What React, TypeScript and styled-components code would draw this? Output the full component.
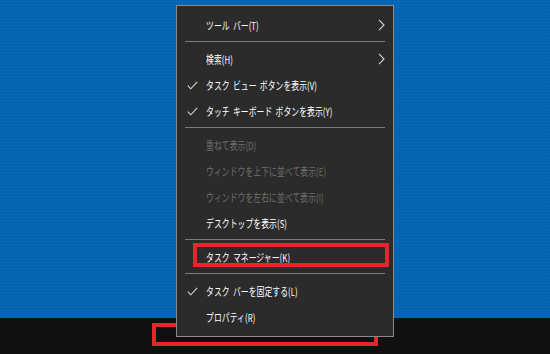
import React from "react";
import styled, { createGlobalStyle, css } from "styled-components";

const Global = createGlobalStyle`
  html, body { margin: 0; padding: 0; background: #101010; }
  body { font-family: "Noto Sans CJK JP", "Noto Sans", sans-serif; }
`;

const Screen = styled.div`
  position: relative;
  width: 550px;
  height: 354px;
  overflow: hidden;
  display: flex;
  flex-direction: column;
`;

const Desktop = styled.div`
  flex: 1;
  background-color: #0563b4;
  background-image: radial-gradient(rgba(40, 140, 160, 0.22) 0.6px, transparent 0.8px);
  background-size: 4px 3px;
`;

const Taskbar = styled.div`
  height: 36px;
  box-sizing: border-box;
  padding: 5px 0 0 152px;
  background: #101010;
  display: flex;
  align-items: flex-start;
`;

const TaskbarMark = styled.div`
  width: 226px;
  height: 23px;
  box-sizing: border-box;
  border: 4px solid #e8242c;
`;

const Menu = styled.div`
  position: absolute;
  left: 176px;
  top: 5px;
  width: 216px;
  padding: 6px 0;
  background: #2b2b2b;
  border: 1px solid #8a8a8a;
  display: flex;
  flex-direction: column;
`;

const Item = styled.div<{ $disabled?: boolean; $marked?: boolean }>`
  position: relative;
  height: 26px;
  display: grid;
  grid-template-columns: 29px 1fr 16px;
  align-items: center;
  color: ${(p) => (p.$disabled ? "#6e6e6e" : "#ffffff")};
  font-size: 11px;
  white-space: nowrap;
  ${(p) =>
    p.$marked &&
    css`
      &::after {
        content: "";
        position: absolute;
        left: 16px;
        right: 4px;
        top: -1px;
        bottom: 3px;
        border: 4px solid #e8242c;
      }
    `}
`;

const Label = styled.span`
  display: inline-block;
  transform: scaleX(0.71);
  transform-origin: left center;
  letter-spacing: 0.1px;
  word-spacing: 2px;
`;

const Check = styled.svg`
  margin-left: 10px;
`;

const Chevron = styled.svg`
  justify-self: start;
  margin-left: 1px;
`;

const Separator = styled.div`
  height: 1px;
  margin: 3px 8px 4px 8px;
  background: #7c7c7c;
`;

const CheckIcon = () => (
  <Check width="11" height="9" viewBox="0 0 11 9">
    <path d="M0.8 4.6 L3.8 7.8 L10.2 0.8" fill="none" stroke="#d6d6d6" strokeWidth="1.1" />
  </Check>
);

const ChevronIcon = () => (
  <Chevron width="7" height="12" viewBox="0 0 7 12">
    <path d="M1 0.8 L6 6 L1 11.2" fill="none" stroke="#d6d6d6" strokeWidth="1.1" />
  </Chevron>
);

type Row =
  | { sep: true }
  | { label: string; check?: boolean; sub?: boolean; disabled?: boolean; marked?: boolean };

const rows: Row[] = [
  { label: "ツール バー(T)", sub: true },
  { sep: true },
  { label: "検索(H)", sub: true },
  { label: "タスク ビュー ボタンを表示(V)", check: true },
  { label: "タッチ キーボード ボタンを表示(Y)", check: true },
  { sep: true },
  { label: "重ねて表示(D)", disabled: true },
  { label: "ウィンドウを上下に並べて表示(E)", disabled: true },
  { label: "ウィンドウを左右に並べて表示(I)", disabled: true },
  { label: "デスクトップを表示(S)" },
  { sep: true },
  { label: "タスク マネージャー(K)", marked: true },
  { sep: true },
  { label: "タスク バーを固定する(L)", check: true },
  { label: "プロパティ(R)" },
];

export default function App() {
  return (
    <Screen>
      <Global />
      <Desktop />
      <Taskbar>
        <TaskbarMark />
      </Taskbar>
      <Menu>
        {rows.map((r, i) =>
          "sep" in r ? (
            <Separator key={i} />
          ) : (
            <Item key={i} $disabled={r.disabled} $marked={r.marked}>
              {r.check ? <CheckIcon /> : <span />}
              <Label>{r.label}</Label>
              {r.sub ? <ChevronIcon /> : <span />}
            </Item>
          )
        )}
      </Menu>
    </Screen>
  );
}
